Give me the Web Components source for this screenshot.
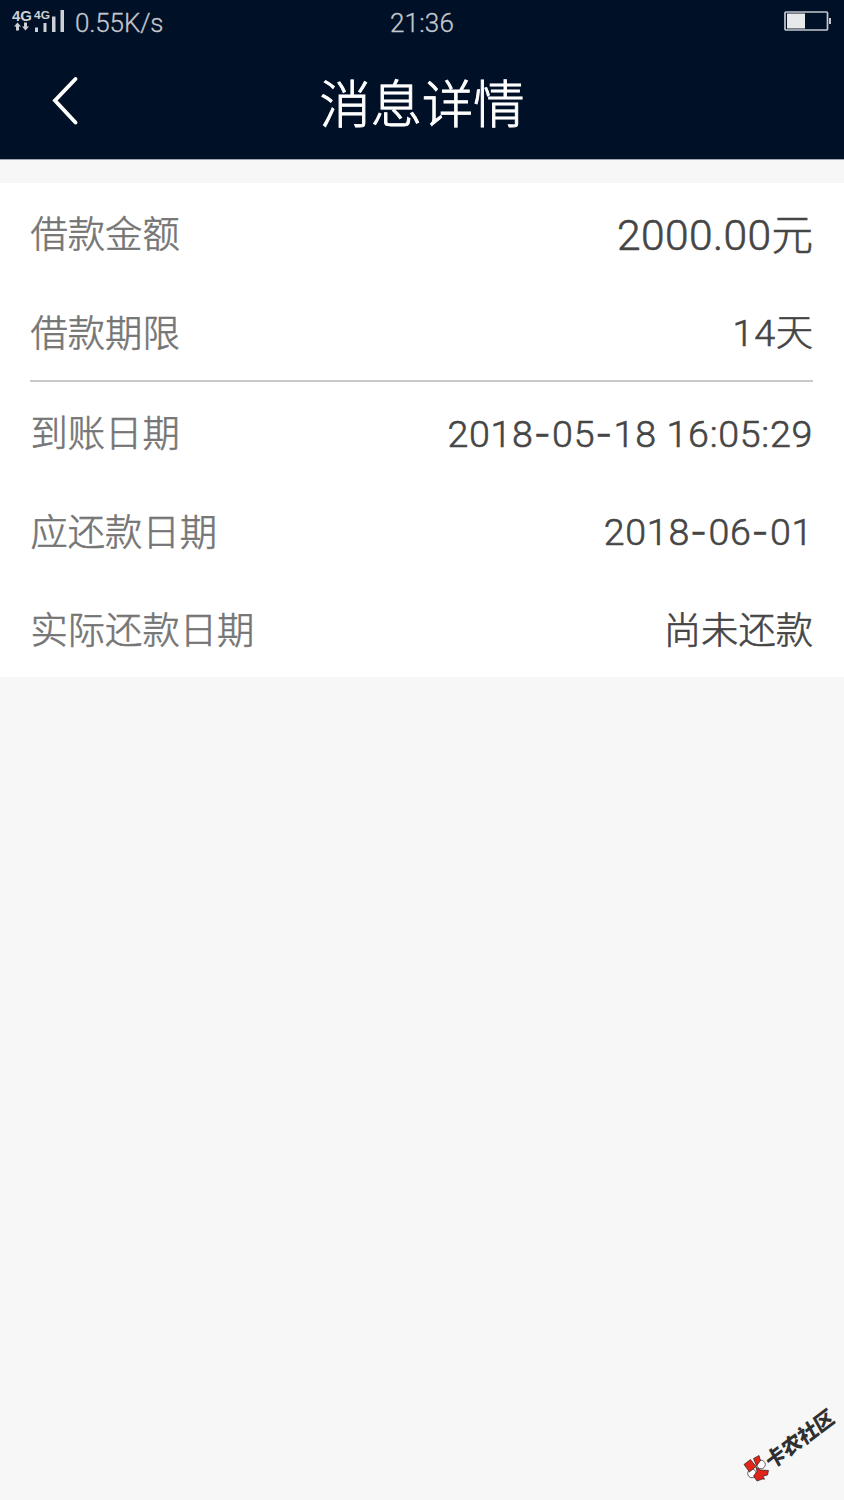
<!DOCTYPE html>
<html lang="zh-CN">
<head>
<meta charset="UTF-8">
<title>消息详情</title>
<style>
  body {
    margin: 0;
    background: #f7f7f7;
    font-family: Roboto, "Noto Sans CJK SC", sans-serif;
  }
</style>
</head>
<body>
<message-page>
  <status-bar slot="header" speed="0.55K/s" time="21:36"></status-bar>
  <title-bar slot="header">消息详情</title-bar>
  <detail-card>
    <detail-row label="借款金额" value="2000.00元" large></detail-row>
    <detail-row label="借款期限" value="14天"></detail-row>
    <detail-row label="到账日期" value="2018-05-18 16:05:29" divided></detail-row>
    <detail-row label="应还款日期" value="2018-06-01"></detail-row>
    <detail-row label="实际还款日期" value="尚未还款"></detail-row>
  </detail-card>
</message-page>
<community-mark></community-mark>

<script>
class MessagePage extends HTMLElement {
  constructor() {
    super();
    this.attachShadow({ mode: "open" });
  }

  connectedCallback() {
    this.shadowRoot.innerHTML = /* html */ `
    <style>
      :host {
        display: block;
        min-height: 1500px;
      }
      header {
        box-sizing: border-box;
        height: 160px;
        background: #001026;
        border-bottom: 1px solid #9fa4ad;
        margin-bottom: 22.5px;
      }
    </style>
    <header><slot name="header"></slot></header>
    <slot></slot>`;
  }
}

class StatusBar extends HTMLElement {
  constructor() {
    super();
    this.attachShadow({ mode: "open" });
  }

  connectedCallback() {
    this.shadowRoot.innerHTML = /* html */ `
    <style>
      :host {
        display: grid;
        grid-template-columns: 1fr auto 1fr;
        align-items: center;
        height: 45px;
        padding: 0 12px;
        color: #c3c7cd;
        font-size: 26px;
        font-weight: 300;
        -webkit-text-stroke: 0.3px;
      }
      .network {
        display: flex;
        align-items: center;
        gap: 10px;
      }
      .speed { letter-spacing: -0.15px; }
      .time { letter-spacing: 0.2px; }
      .battery {
        justify-self: end;
        margin-bottom: 2px;
      }
      svg { display: block; }
    </style>
    <div class="network">
      <svg width="53" height="34" viewBox="0 -4 53 34" fill="#cdd0d5">
        <g font-family="Liberation Sans" font-weight="bold" stroke="none">
          <text x="0" y="10.5" font-size="14" textLength="20" lengthAdjust="spacingAndGlyphs">4G</text>
          <text x="22" y="8.500" font-size="11" textLength="16" lengthAdjust="spacingAndGlyphs">4G</text>
        </g>
        <path stroke="none" d="M5.500 12.500l3.500 4H7v4H4v-4H2zM13.500 20.500l-3.500-4h2v-4h3v4h2z"/>
        <path stroke="none" d="M23 17.500h3v4.500h-3zM31.500 13h3v9h-3zM40 6.500h3.500V22H40zM48.500 0h3.500v22h-3.500z"/>
      </svg>
      <span class="speed">${this.getAttribute("speed")}</span>
    </div>
    <span class="time">${this.getAttribute("time")}</span>
    <svg class="battery" width="48" height="24" viewBox="0 0 48 24">
      <rect x="1" y="2" width="42.500" height="18" rx="1" fill="none" stroke="#c5c8ce" stroke-width="1.700"/>
      <rect x="3" y="3.500" width="18" height="15" fill="#e8e9ea"/>
      <rect x="45" y="8" width="2" height="6" fill="#c5c8ce"/>
    </svg>`;
  }
}

class TitleBar extends HTMLElement {
  constructor() {
    super();
    this.attachShadow({ mode: "open" });
  }

  connectedCallback() {
    this.shadowRoot.innerHTML = /* html */ `
    <style>
      :host {
        display: grid;
        grid-template-columns: 80px 1fr 80px;
        align-items: center;
        height: 112px;
        color: #fff;
      }
      svg {
        display: block;
        justify-self: end;
      }
      h1 {
        margin: 0;
        text-align: center;
        font-family: "Noto Sans CJK SC", sans-serif;
        font-size: 51.3px;
        font-weight: 300;
        line-height: 1;
        -webkit-text-stroke: 0.9px;
      }
    </style>
    <svg width="30" height="50" viewBox="0 0 30 50">
      <path d="M25.500 3L5 24.500l20.500 22" fill="none" stroke="#fff" stroke-width="3.900" stroke-linecap="round"/>
    </svg>
    <h1><slot></slot></h1>`;
  }
}

class DetailCard extends HTMLElement {
  constructor() {
    super();
    this.attachShadow({ mode: "open" });
  }

  connectedCallback() {
    this.shadowRoot.innerHTML = /* html */ `
    <style>
      :host {
        display: block;
        padding: 0 31px 0 30px;
        height: 494.500px;
        box-sizing: border-box;
        background: #fff;
      }
    </style>
    <slot></slot>`;
  }
}

class DetailRow extends HTMLElement {
  constructor() {
    super();
    this.attachShadow({ mode: "open" });
  }

  // digits are set a little wider than the characters around them
  get formattedValue() {
    return this.getAttribute("value")
      .replace(/[\d.:\- ]+/g, `<span class="number">$&</span>`)
      .replace(/(\d)-/g, `$1<span class="dash">-</span>`);
  }

  connectedCallback() {
    this.shadowRoot.innerHTML = /* html */ `
    <style>
      :host {
        display: flex;
        justify-content: space-between;
        align-items: center;
        height: 98.500px;
        line-height: 1;
        font-size: 37.300px;
        font-weight: 300;
        -webkit-text-stroke: 0.6px;
      }
      :host([divided]) {
        border-top: 2px solid #c9c9c9;
      }
      .label {
        padding: 2.5px 0 0 0.5px;
        font-family: "Noto Sans CJK SC", sans-serif;
        color: #757575;
      }
      .value {
        padding-top: 7px;
        color: #454545;
        white-space: nowrap;
      }
      .number {
        font-size: 37.600px;
        letter-spacing: 0.7px;
      }
      .dash {
        font-family: Inter, sans-serif;
        letter-spacing: 1.4px;
      }
      :host([large]) .value {
        padding-top: 8.5px;
        font-size: 41.500px;
      }
      :host([large]) .number {
        font-size: 42.500px;
        letter-spacing: 0.4px;
      }
    </style>
    <span class="label">${this.getAttribute("label")}</span>
    <span class="value">${this.formattedValue}</span>`;
  }
}

class CommunityMark extends HTMLElement {
  constructor() {
    super();
    this.attachShadow({ mode: "open" });
  }

  connectedCallback() {
    this.shadowRoot.innerHTML = /* html */ `
    <style>
      :host {
        position: absolute;
        left: 740px;
        top: 1400px;
      }
      svg { display: block; }
    </style>
    <svg width="104" height="90" viewBox="0 0 104 90">
      <g stroke="#222" stroke-width=".7">
        <circle cx="21" cy="64.500" r="4.300" fill="#fff"/>
        <circle cx="12" cy="73.500" r="4.300" fill="#fff"/>
        <path d="M4 64.500l6.500-5 5.500 7-6.500 5.500zM13.500 58.500l5.500-3 1.500 5-4 5.500zM16 67l4.500 3 8 .5-1 4.500-4.500 1.200 1.500 3-2-.2-5.500 2-3.500-5 3.500-4.500z" fill="#e1251b"/>
      </g>
      <text transform="translate(31 70) rotate(-37) skewX(-8)" font-family="Noto Sans CJK SC" font-weight="900" font-size="20.300" fill="#303030">卡农社区</text>
    </svg>`;
  }
}

customElements.define("message-page", MessagePage);
customElements.define("status-bar", StatusBar);
customElements.define("title-bar", TitleBar);
customElements.define("detail-card", DetailCard);
customElements.define("detail-row", DetailRow);
customElements.define("community-mark", CommunityMark);
</script>
</body>
</html>
